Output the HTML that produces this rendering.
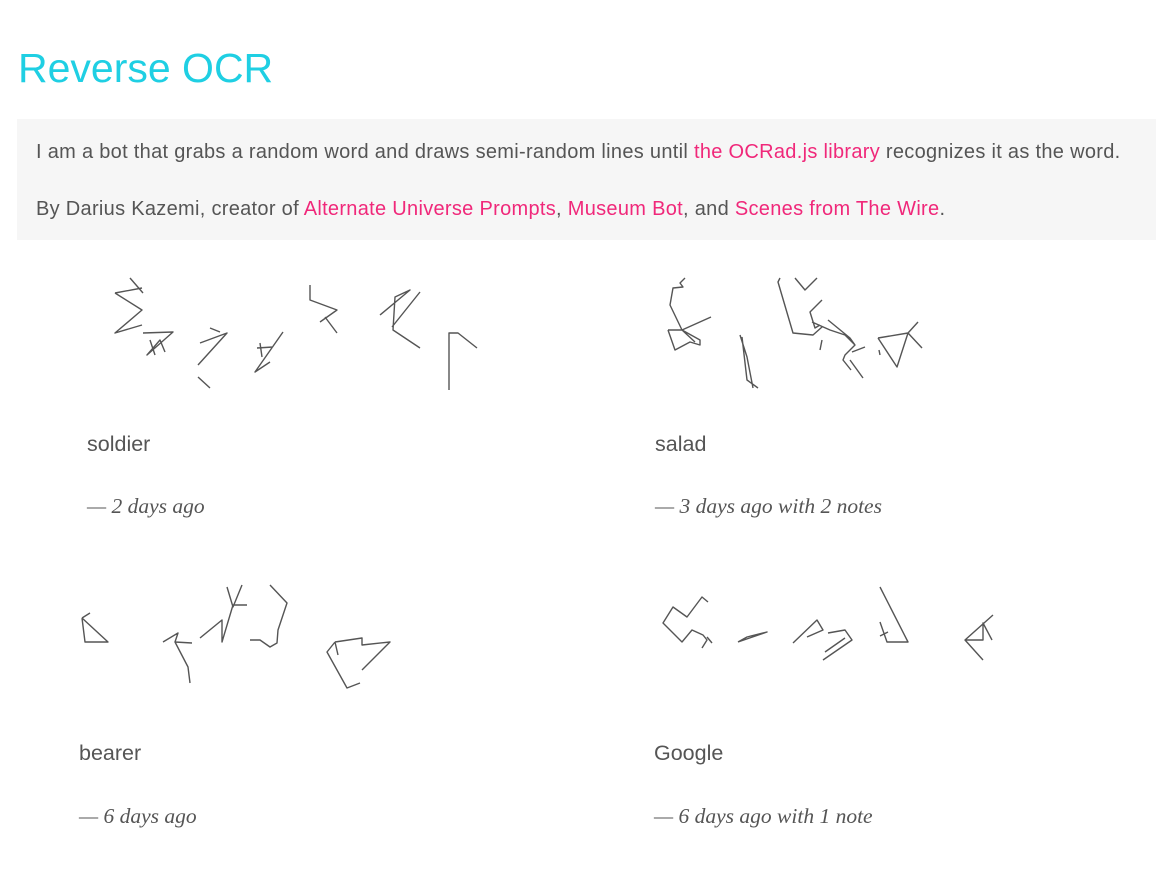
<!DOCTYPE html>
<html><head><meta charset="utf-8"><style>
*{margin:0;padding:0}
body{width:1175px;height:875px;background:#fff;position:relative;overflow:hidden;font-family:"Liberation Sans",Arial,sans-serif;color:#555}
h1{position:absolute;left:18px;top:44px;font-size:41px;font-weight:normal;color:#1fcfe3;line-height:48px}
.box{position:absolute;left:17px;top:119px;width:1139px;height:121px;background:#f6f6f6}
.box p{position:absolute;left:19px;font-size:20px;letter-spacing:0.3px;line-height:22px;white-space:nowrap}
a{color:#f0287a;text-decoration:none}
.w{position:absolute;font-size:21.5px;line-height:24px}
.d{position:absolute;font-family:"Liberation Serif",Georgia,serif;font-style:italic;font-size:21.5px;line-height:24px;color:#555}
svg{position:absolute;left:0;top:0}
</style></head><body>
<h1>Reverse OCR</h1>
<div class="box">
<p style="top:22px">I am a bot that grabs a random word and draws semi-random lines until <a>the OCRad.js library</a> recognizes it as the word.</p>
<p style="top:79px">By Darius Kazemi, creator of <a>Alternate Universe Prompts</a>, <a>Museum Bot</a>, and <a>Scenes from The Wire</a>.</p>
</div>
<svg width="1175" height="875" fill="none" stroke="#555" stroke-width="1.4" stroke-linejoin="round">
<path d="M130 278L143 293M115 293L142 288M115 293L142 310L115 333L142 325M143 333L173 332L147 355L160 340L165 352M150 340L155 355"/>
<path d="M200 343L227 333L198 365M210 328L220 332M198 377L210 388"/>
<path d="M283 332L255 372L270 362M257 348L273 347M260 343L262 357"/>
<path d="M310 285L310 300L337 310L320 322M325 317L337 333"/>
<path d="M420 292L392 327M380 315L410 290L395 297L393 330L420 348"/>
<path d="M449 390L449 333L458 333L477 348"/>
<path d="M685 278L680 283L683 287L673 288L670 305L682 330L695 342M682 330L711 317M668 330L682 330L700 340L700 345L690 342L675 350L668 330"/>
<path d="M740 335L747 357L753 388M742 337L747 380L758 388"/>
<path d="M780 278L778 282L793 333L813 335L822 327M795 278L805 290L817 278M822 300L810 312L815 328L820 325M812 322L830 330L845 335L855 345M828 320L850 338L855 345L845 355L843 360L851 370M852 352L865 347M850 360L863 378M822 340L820 350"/>
<path d="M878 338L908 333L897 367L878 338M908 333L918 322M908 333L922 348M879 350L880 355"/>
<path d="M82 618L85 642L108 642L82 618M82 618L90 613"/>
<path d="M163 642L178 633L175 642L192 643M175 642L188 667L190 683"/>
<path d="M200 638L222 620L222 642L233 605L247 605M227 587L233 607L242 585"/>
<path d="M270 585L287 603L278 630L277 643L270 647L260 640L250 640"/>
<path d="M335 642L327 652L347 688L360 683M335 642L362 638L362 645L390 642L362 670M335 642L338 655"/>
<path d="M708 602L702 597L687 617L673 607L663 623L682 642L692 630L703 635L707 640L702 648M707 637L712 643"/>
<path d="M738 642L767 632L747 637L738 642"/>
<path d="M793 643L817 620L823 630L807 637M828 633L845 630L852 640L823 660M825 652L845 638"/>
<path d="M880 587L908 642L887 642L880 622M880 636L888 632"/>
<path d="M993 615L965 640L983 660M965 640L983 640L983 623L992 640"/>
</svg>
<div class="w" style="left:87px;top:432px">soldier</div>
<div class="d" style="left:87px;top:494px">— 2 days ago</div>
<div class="w" style="left:655px;top:432px">salad</div>
<div class="d" style="left:655px;top:494px">— 3 days ago with 2 notes</div>
<div class="w" style="left:79px;top:741px">bearer</div>
<div class="d" style="left:79px;top:804px">— 6 days ago</div>
<div class="w" style="left:654px;top:741px">Google</div>
<div class="d" style="left:654px;top:804px">— 6 days ago with 1 note</div>
</body></html>
